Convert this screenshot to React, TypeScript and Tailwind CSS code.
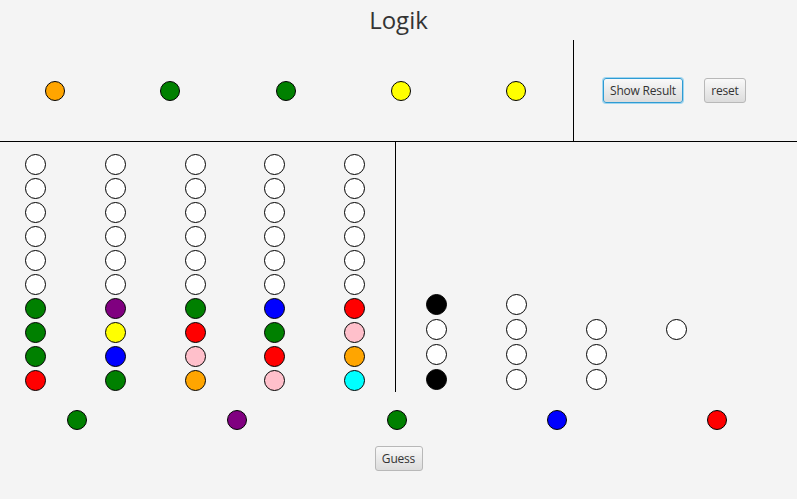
import React from "react";

const FILL: Record<string, string> = {
  white: "bg-white",
  black: "bg-black",
  green: "bg-[#008000]",
  orange: "bg-[#ffa500]",
  yellow: "bg-[#ffff00]",
  purple: "bg-[#800080]",
  blue: "bg-[#0000ff]",
  red: "bg-[#ff0000]",
  pink: "bg-[#ffc0cb]",
  cyan: "bg-[#00ffff]",
};

const SECRET = ["orange", "green", "green", "yellow", "yellow"];

const BOARD = [
  ["white", "white", "white", "white", "white"],
  ["white", "white", "white", "white", "white"],
  ["white", "white", "white", "white", "white"],
  ["white", "white", "white", "white", "white"],
  ["white", "white", "white", "white", "white"],
  ["white", "white", "white", "white", "white"],
  ["green", "purple", "green", "blue", "red"],
  ["green", "yellow", "red", "green", "pink"],
  ["green", "blue", "pink", "red", "orange"],
  ["red", "green", "orange", "pink", "cyan"],
];

// feedback pegs, null = empty cell
const HINTS: (string | null)[][] = [
  ["black", "white", null, null],
  ["white", "white", "white", "white"],
  ["white", "white", "white", null],
  ["black", "white", "white", null],
];

const PICK = ["green", "purple", "green", "blue", "red"];

function Peg({ color, size = "w-[21px] h-[21px]" }: { color: string; size?: string }) {
  return <div className={`${size} rounded-full border border-black ${FILL[color]}`} />;
}

const btn =
  "h-[25px] flex items-center justify-center whitespace-nowrap rounded-[3px] border bg-gradient-to-b from-[#f9f9f9] to-[#dcdcdc] text-[12px] tracking-[-0.2px] text-[#333]";

export default function App() {
  return (
    <div
      className="w-[797px] h-[499px] bg-[#f4f4f4] flex flex-col overflow-hidden"
      style={{ fontFamily: '"Open Sans", "Noto Sans", sans-serif' }}
    >
      {/* title */}
      <div className="h-[40px] flex items-center justify-center text-[24px] text-[#333]">
        Logik
      </div>

      {/* secret row + controls */}
      <div className="h-[101px] flex">
        <div className="w-[573px] flex items-center pl-[45px] gap-[95.25px]">
          {SECRET.map((c, i) => (
            <Peg key={i} color={c} size="w-[20px] h-[20px]" />
          ))}
        </div>
        <div className="flex-1 border-l border-black flex items-center pl-[29px] gap-[21px]">
          <button className={`${btn} w-[80px] border-[#2f9bd3] shadow-[0_0_0_1px_#9fd6f0]`}>
            Show Result
          </button>
          <button className={`${btn} w-[42px] border-[#b8b8b8]`}>reset</button>
        </div>
      </div>

      {/* board */}
      <div className="h-[251px] flex border-t border-black">
        <div className="w-[395px] flex pl-[25px] pt-[12px] gap-[58.75px]">
          {[0, 1, 2, 3, 4].map((col) => (
            <div key={col} className="flex flex-col gap-[3px]">
              {BOARD.map((row, r) => (
                <Peg key={r} color={row[col]} />
              ))}
            </div>
          ))}
        </div>
        <div className="flex-1 border-l border-black pl-[30px] pt-[152px]">
          <div className="grid grid-cols-[repeat(4,21px)] gap-x-[59px] gap-y-[4px]">
            {HINTS.flat().map((c, i) =>
              c ? <Peg key={i} color={c} /> : <div key={i} className="w-[21px] h-[21px]" />
            )}
          </div>
        </div>
      </div>

      {/* current pick */}
      <div className="mt-[18px] flex pl-[67px] gap-[140px]">
        {PICK.map((c, i) => (
          <Peg key={i} color={c} size="w-[20px] h-[20px]" />
        ))}
      </div>

      <div className="mt-[16px] flex justify-center">
        <button className={`${btn} w-[48px] h-[24px] border-[#b8b8b8]`}>Guess</button>
      </div>
    </div>
  );
}
